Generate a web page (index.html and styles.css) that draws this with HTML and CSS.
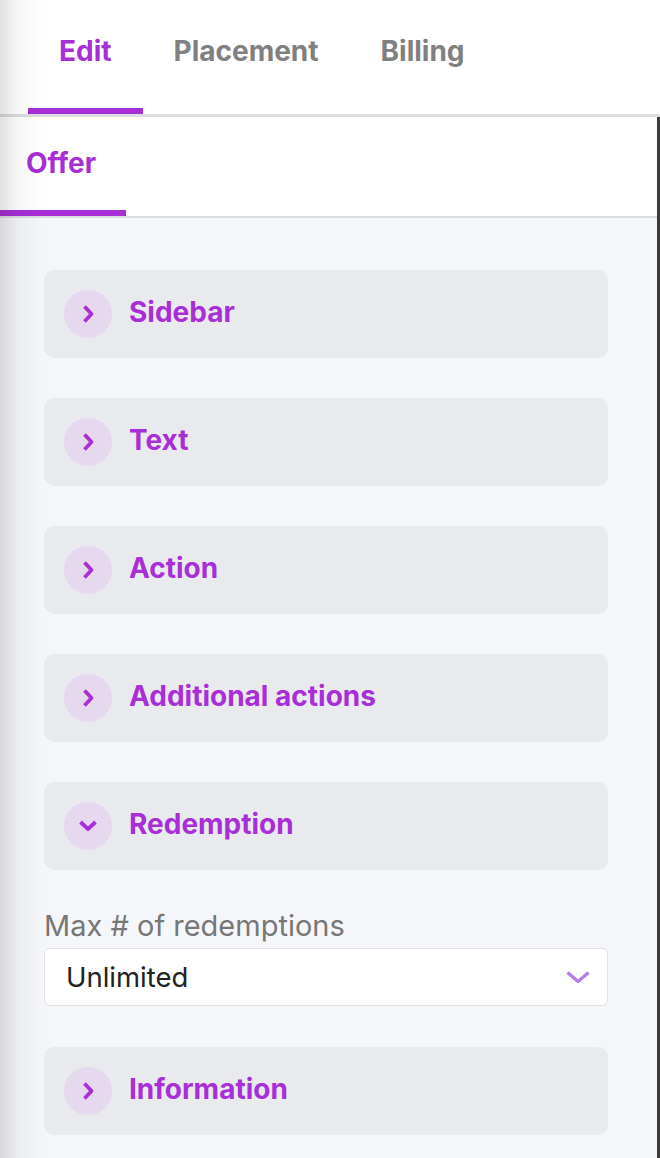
FILE: index.html
```html
<!DOCTYPE html>
<html>
<head>
<meta charset="utf-8">
<link rel="stylesheet" href="styles.css">
</head>
<body>
<div class="edge-shade"></div>
<nav class="tabs">
  <div class="tab active">Edit</div>
  <div class="tab">Placement</div>
  <div class="tab">Billing</div>
</nav>
<section class="panel">
  <nav class="subtabs">
    <div class="subtab active">Offer</div>
  </nav>
  <div class="content">
    <div class="card"><span class="toggle"><svg width="16" height="22" viewBox="0 0 16 22"><path d="M4.5 3.5 L11.5 11 L4.5 18.5" fill="none" stroke="#a92fd6" stroke-width="3.8" stroke-linejoin="round"/></svg></span><span class="card-title">Sidebar</span></div>
    <div class="card"><span class="toggle"><svg width="16" height="22" viewBox="0 0 16 22"><path d="M4.5 3.5 L11.5 11 L4.5 18.5" fill="none" stroke="#a92fd6" stroke-width="3.8" stroke-linejoin="round"/></svg></span><span class="card-title">Text</span></div>
    <div class="card"><span class="toggle"><svg width="16" height="22" viewBox="0 0 16 22"><path d="M4.5 3.5 L11.5 11 L4.5 18.5" fill="none" stroke="#a92fd6" stroke-width="3.8" stroke-linejoin="round"/></svg></span><span class="card-title">Action</span></div>
    <div class="card"><span class="toggle"><svg width="16" height="22" viewBox="0 0 16 22"><path d="M4.5 3.5 L11.5 11 L4.5 18.5" fill="none" stroke="#a92fd6" stroke-width="3.8" stroke-linejoin="round"/></svg></span><span class="card-title">Additional actions</span></div>
    <div class="card"><span class="toggle"><svg width="22" height="16" viewBox="0 0 22 16"><path d="M3.5 4 L11 11 L18.5 4" fill="none" stroke="#a92fd6" stroke-width="3.8" stroke-linejoin="round"/></svg></span><span class="card-title">Redemption</span></div>
    <div class="field">
      <div class="label">Max # of redemptions</div>
      <div class="select"><span>Unlimited</span><svg width="26" height="16" viewBox="0 0 26 16"><path d="M2.5 3.5 L13 12.5 L23.5 3.5" fill="none" stroke="#b67ee2" stroke-width="3.4" stroke-linejoin="round"/></svg></div>
    </div>
    <div class="card"><span class="toggle"><svg width="16" height="22" viewBox="0 0 16 22"><path d="M4.5 3.5 L11.5 11 L4.5 18.5" fill="none" stroke="#a92fd6" stroke-width="3.8" stroke-linejoin="round"/></svg></span><span class="card-title">Information</span></div>
  </div>
</section>
</body>
</html>
```
FILE: styles.css
```css
html, body {
  margin: 0;
  padding: 0;
}
body {
  font-family: Inter, "Noto Sans", sans-serif;
  background: #f5f6fa;
  width: 660px;
  height: 1158px;
  overflow: hidden;
}
.edge-shade {
  position: fixed;
  left: 0;
  top: 0;
  width: 44px;
  height: 100%;
  background: linear-gradient(to right, rgba(0,0,0,0.12), rgba(0,0,0,0.035) 40%, rgba(0,0,0,0));
  pointer-events: none;
  z-index: 5;
}
.tabs {
  display: flex;
  height: 114px;
  padding-left: 28px;
  background: #fff;
  border-bottom: 3px solid #dcdde0;
}
.tab {
  padding: 0 31px;
  font-size: 28px;
  font-weight: 700;
  color: #808080;
  line-height: 102px;
  height: 108px;
  border-bottom: 6px solid transparent;
}
.tab.active {
  color: #a82ed7;
  border-bottom-color: #a82ed7;
}
.panel {
  border-right: 3px solid #3b3b3b;
  height: 1041px;
}
.subtabs {
  display: flex;
  background: #fff;
  height: 99px;
  border-bottom: 2px solid #dcdde0;
}
.subtab {
  padding: 0 30px 0 26px;
  font-size: 28px;
  font-weight: 700;
  color: #a82ed7;
  line-height: 92px;
  height: 93px;
  border-bottom: 6px solid #a82ed7;
}
.content {
  padding: 52px 49px 0 44px;
  display: flex;
  flex-direction: column;
  gap: 40px;
}
.card {
  height: 88px;
  border-radius: 10px;
  background: #e9eaee;
  display: flex;
  align-items: center;
  padding-left: 20px;
  gap: 17px;
}
.toggle {
  width: 48px;
  height: 48px;
  border-radius: 50%;
  background: #e6d8ee;
  display: flex;
  align-items: center;
  justify-content: center;
}
.toggle svg {
  display: block;
}
.card-title {
  font-size: 28px;
  font-weight: 700;
  color: #a82ed7;
  margin-bottom: 4px;
}
.field {
  margin-bottom: 1px;
}
.label {
  font-size: 29px;
  color: #777;
  line-height: 32px;
  margin-bottom: 6px;
}
.select {
  height: 56px;
  background: #fff;
  border: 1px solid #e1e1e3;
  border-radius: 6px;
  display: flex;
  align-items: center;
  justify-content: space-between;
  padding: 0 16px 0 21px;
  font-size: 27.5px;
  color: #222;
}
.select svg {
  display: block;
}
```
